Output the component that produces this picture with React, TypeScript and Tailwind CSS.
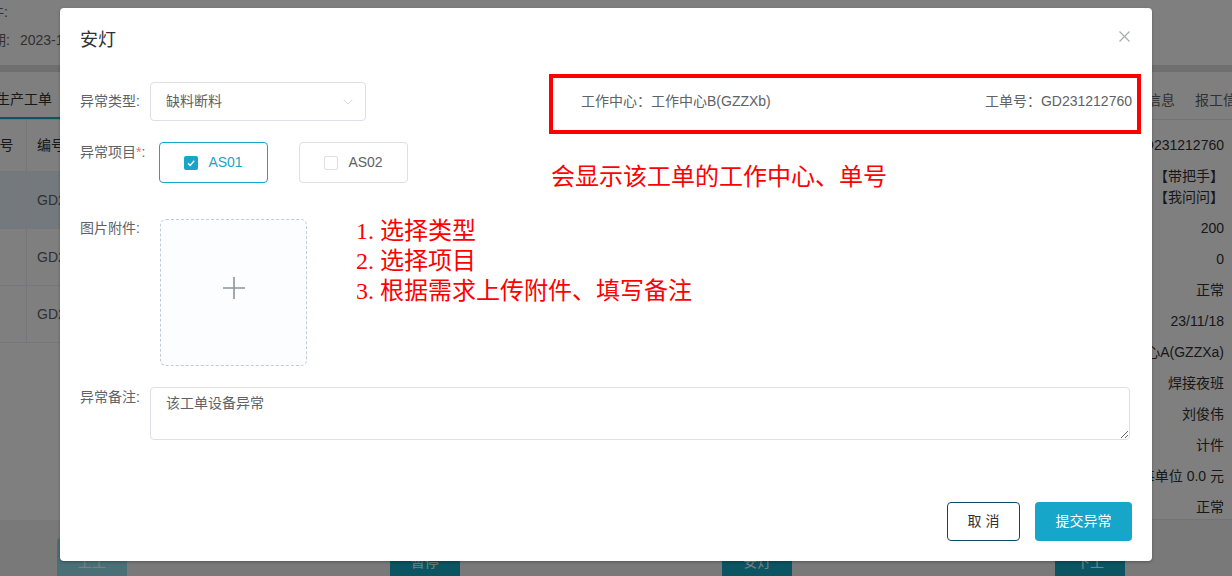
import { ChevronDown } from 'lucide-react';

/* Right-hand detail values of the work order (behind the dialog) */
const detailValues = ['200', '0', '正常', '23/11/18', '工作中心A(GZZXa)', '焊接夜班', '刘俊伟', '计件', '每单位 0.0 元', '正常'];

const tableRows = ['GD231212760', 'GD231212761', 'GD231212762'];

const bottomActions = [
  { label: '上工', disabled: true },
  { label: '暂停', disabled: false },
  { label: '安灯', disabled: false },
  { label: '下工', disabled: false },
];

export default function App() {
  return (
    <div className="relative h-[576px] w-[1232px] overflow-hidden bg-white font-['Liberation_Sans','Noto_Sans_CJK_SC',sans-serif] text-[14px] text-[#333]">
      <WorkOrderPage />

      {/* Mask */}
      <div className="absolute inset-0 bg-black/50" />

      <AndonDialog />
    </div>
  );
}

function WorkOrderPage() {
  return (
    <div className="flex h-full flex-col">
      <div className="h-[65px] pt-[2px] text-[#606266]">
        <div className="-ml-[24px] leading-[20px]">附件:</div>
        <div className="-ml-[50px] mt-[8px] leading-[20px]">
          计划日期:<span className="ml-[10px]">2023-11-18</span>
        </div>
      </div>
      <div className="h-[7px] bg-[#dedede]" />

      <div className="flex min-h-0 flex-1">
        {/* Work order list */}
        <div className="min-w-0 flex-1">
          <div className="flex h-[48px] items-end border-b border-[#e4e7ed]">
            <div className="-ml-[4px] border-b-2 border-[#16aac6] pb-[8px] pr-[8px] leading-[20px] text-[#303133]">生产工单</div>
          </div>
          <div className="-ml-[27px]">
            <div className="flex h-[52px] items-center border-b border-[#ebeef5] text-[#303133]">
              <div className="flex h-full w-[54px] items-center justify-center border-r border-[#ebeef5]">序号</div>
              <div className="pl-[10px]">编号</div>
            </div>
            {tableRows.map((no, i) => (
              <div key={no} className={`flex h-[57px] items-center border-b border-[#ebeef5] ${i === 0 ? 'bg-[#e6f3f8]' : ''}`}>
                <div className="h-full w-[54px] border-r border-[#ebeef5]" />
                <div className="pl-[10px] text-[#606266]">{no}</div>
              </div>
            ))}
          </div>
        </div>

        {/* Work order details */}
        <div className="w-[400px] shrink-0">
          <div className="flex h-[48px] items-end gap-[20px] border-b border-[#e4e7ed] pb-[9px] pl-[287px] leading-[20px] text-[#606266]">
            <span className="shrink-0">基本信息</span>
            <span className="shrink-0">报工信息</span>
          </div>
          <div className="flex h-[400px] flex-col gap-[10px] border-b border-[#e4e7ed] pr-[8px] pt-[15px] text-right leading-[21px] text-[#303133]">
            <div>GD231212760</div>
            <div>
              【带把手】
              <br />
              【我问问】
            </div>
            {detailValues.map((v, i) => (
              <div key={i}>{v}</div>
            ))}
          </div>
        </div>
      </div>

      <div className="flex h-[56px] justify-between bg-[#f2f3f5] pl-[57px] pr-[107px] pt-[18px]">
        {bottomActions.map((a) => (
          <div
            key={a.label}
            className={`flex h-[48px] w-[70px] items-center justify-center rounded-[4px] text-white ${a.disabled ? 'bg-[#96dfee]' : 'bg-[#16aac6]'}`}
          >
            {a.label}
          </div>
        ))}
      </div>
    </div>
  );
}

function AndonDialog() {
  return (
    <div className="absolute left-[60px] top-[8px] flex h-[553px] w-[1092px] flex-col rounded-[4px] bg-white shadow-[0_1px_3px_rgba(0,0,0,0.3)]">
      {/* Header */}
      <div className="px-5 pb-[10px] pt-5">
        <span className="text-[18px] leading-6 text-[#303133]">安灯</span>
      </div>
      <button className="absolute right-[22px] top-[23px] h-[11px] w-[11px]">
        <svg viewBox="0 0 11 11" className="h-[11px] w-[11px]" fill="none" stroke="#a8abb2" strokeWidth="1.2">
          <path d="M0.5 0.5 L10.5 10.5 M10.5 0.5 L0.5 10.5" />
        </svg>
      </button>

      {/* Annotation over the screenshot */}
      <div className="pointer-events-none absolute left-[489px] top-[66px] h-[60px] w-[592px] border-4 border-[#ff0000]" />
      <div className="absolute left-[491px] top-[154px] font-['Liberation_Serif','Noto_Sans_CJK_SC',serif] text-[24px] leading-[30px] text-[#ff0000]">
        会显示该工单的工作中心、单号
      </div>

      {/* Body */}
      <div className="px-5 pt-5 text-[#606266]">
        <div className="flex h-[39px] items-center">
          <div className="w-[70px] shrink-0">异常类型:</div>
          <div className="flex h-[39px] w-[216px] items-center justify-between rounded-[4px] border border-[#dcdfe6] pl-[15px] pr-[9px]">
            <span>缺料断料</span>
            <ChevronDown size={16} strokeWidth={1} color="#c0c4cc" />
          </div>
          <div className="ml-[215px] flex flex-1 justify-between">
            <span>工作中心：工作中心B(GZZXb)</span>
            <span>工单号：GD231212760</span>
          </div>
        </div>

        <div className="mt-[21px] flex items-start">
          <div className="w-[79px] shrink-0 leading-5">
            异常项目<span className="text-[#f56c6c]">*</span>:
          </div>
          <div className="flex gap-[31px]">
            <div className="flex h-[41px] w-[109px] items-center justify-center gap-[10px] rounded-[4px] border border-[#17a5c9] text-[#17a5c9]">
              <span className="flex h-[14px] w-[14px] items-center justify-center rounded-[2px] bg-[#17a5c9]">
                <svg viewBox="0 0 14 14" className="h-[14px] w-[14px]" fill="none" stroke="white" strokeWidth="1.4">
                  <path d="M4 7.2 L6.2 9.4 L10.2 4.8" />
                </svg>
              </span>
              <span>AS01</span>
            </div>
            <div className="flex h-[41px] w-[109px] items-center justify-center gap-[10px] rounded-[4px] border border-[#dcdfe6]">
              <span className="h-[14px] w-[14px] rounded-[2px] border border-[#dcdfe6] bg-white" />
              <span>AS02</span>
            </div>
          </div>
        </div>

        <div className="mt-[35px] flex items-start">
          <div className="w-[80px] shrink-0 leading-5">图片附件:</div>
          <div className="mt-[1px] flex h-[147px] w-[147px] items-center justify-center rounded-[6px] border border-dashed border-[#c0ccda] bg-[#fbfdff]">
            <svg viewBox="0 0 24 24" className="mb-[10px] h-[24px] w-[24px]" fill="none" stroke="#8c939d" strokeWidth="1.6">
              <path d="M12 1 V23 M1 12 H23" />
            </svg>
          </div>
          <div className="-mt-[2px] ml-[49px] font-['Liberation_Serif','Noto_Sans_CJK_SC',serif] text-[24px] leading-[30px] text-[#ff0000]">
            <div><span className="inline-block w-[24px]">1.</span>选择类型</div>
            <div><span className="inline-block w-[24px]">2.</span>选择项目</div>
            <div><span className="inline-block w-[24px]">3.</span>根据需求上传附件、填写备注</div>
          </div>
        </div>

        <div className="mt-[21px] flex items-start">
          <div className="w-[70px] shrink-0 leading-5">异常备注:</div>
          <textarea
            readOnly
            value="该工单设备异常"
            className="mr-[2px] h-[53px] flex-1 resize-y rounded-[4px] border border-[#dcdfe6] px-[15px] py-[5px] leading-[21px] text-[#606266] outline-none"
          />
        </div>
      </div>

      {/* Footer */}
      <div className="mt-auto flex justify-end gap-[15px] px-5 pb-5">
        <button className="h-[39px] w-[73px] rounded-[4px] border border-[#0e4a66] bg-white text-[#303133]">取 消</button>
        <button className="h-[39px] w-[97px] rounded-[4px] bg-[#15a6c9] text-white">提交异常</button>
      </div>
    </div>
  );
}
